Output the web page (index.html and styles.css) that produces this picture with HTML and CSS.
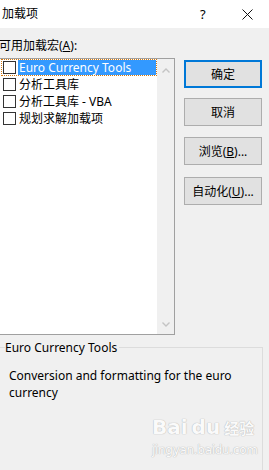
FILE: index.html
```html
<!DOCTYPE html>
<html lang="zh">
<head>
<meta charset="utf-8">
<link rel="stylesheet" href="styles.css">
</head>
<body>
<div class="window">
  <div class="titlebar">
    <span class="title">加载项</span>
    <span class="help">?</span>
    <svg class="close" width="11" height="11" viewBox="0 0 11 11"><path d="M0.5 0.5 L10.5 10.5 M10.5 0.5 L0.5 10.5" stroke="#111" stroke-width="1" fill="none"/></svg>
  </div>
  <div class="content">
    <div class="label">可用加载宏(<u>A</u>):</div>
    <div class="main">
      <div class="listbox">
        <div class="items">
          <div class="item selected"><span class="check"></span><span class="text">Euro Currency Tools</span></div>
          <div class="item"><span class="check"></span><span class="text">分析工具库</span></div>
          <div class="item"><span class="check"></span><span class="text">分析工具库 - VBA</span></div>
          <div class="item"><span class="check"></span><span class="text">规划求解加载项</span></div>
        </div>
        <div class="scrollbar">
          <svg width="8" height="5" viewBox="0 0 8 5"><path d="M0.5 4.5 L4 1 L7.5 4.5" stroke="#c4c4c4" stroke-width="1.4" fill="none"/></svg>
          <svg width="8" height="5" viewBox="0 0 8 5"><path d="M0.5 0.5 L4 4 L7.5 0.5" stroke="#c4c4c4" stroke-width="1.4" fill="none"/></svg>
        </div>
      </div>
      <div class="buttons">
        <button class="btn default">确定</button>
        <button class="btn">取消</button>
        <button class="btn b3">浏览(<u>B</u>)...</button>
        <button class="btn b4">自动化(<u>U</u>)...</button>
      </div>
    </div>
    <div class="group">
      <div class="legend">Euro Currency Tools</div>
      <div class="desc">Conversion and formatting for the euro currency</div>
    </div>
  </div>
  <div class="watermark">
    <div class="wm-top"><span class="wm-bai">Bai</span><span class="wm-du">du</span><span class="wm-jy">经验</span></div>
    <div class="wm-url">jingyan.baidu.com</div>
  </div>
</div>
</body>
</html>
```

FILE: styles.css
```css
html, body {
  margin: 0;
  padding: 0;
}
body {
  width: 269px;
  height: 470px;
  overflow: hidden;
  font-family: "Noto Sans", "Noto Sans CJK SC", sans-serif;
  font-size: 12px;
  color: #000;
}
.window {
  position: relative;
  width: 269px;
  height: 470px;
  background: #f0f0f0;
  overflow: hidden;
}
.titlebar {
  height: 28px;
  background: #fff;
  display: flex;
  align-items: center;
  padding-left: 2px;
}
.title {
  flex: 1;
  font-size: 12px;
  line-height: 16px;
}
.help {
  width: 8px;
  font-size: 13px;
  line-height: 16px;
  margin-right: 34px;
}
.close {
  margin-right: 16px;
}
.content {
  display: flex;
  flex-direction: column;
}
.label {
  padding-top: 10px;
  line-height: 16px;
  height: 17px;
  margin-left: -1px;
}
.label u, .btn u {
  text-underline-offset: 1px;
}
.main {
  display: flex;
  margin-top: 3px;
}
.listbox {
  margin-left: -1px;
  width: 174px;
  height: 275px;
  border: 1px solid #a0a0a0;
  background: #fff;
  display: flex;
}
.items {
  flex: 1;
  padding-left: 1px;
}
.item {
  height: 17px;
  display: flex;
  align-items: center;
  position: relative;
}
.check {
  width: 11px;
  height: 11px;
  border: 1px solid #333;
  background: #fff;
  margin-left: 2px;
  margin-right: 2px;
}
.text {
  line-height: 17px;
  padding-left: 1px;
  white-space: nowrap;
}
.item.selected {
  outline: 1px dotted #d57a10;
  outline-offset: -1px;
}
.item.selected .text {
  background: #3399ff;
  color: #fff;
  flex: 1;
  height: 15px;
  line-height: 15px;
  margin-right: 1px;
}
.scrollbar {
  width: 17px;
  background: #f0f0f0;
  display: flex;
  flex-direction: column;
  justify-content: space-between;
  align-items: center;
  padding: 9px 0 7px;
  box-sizing: border-box;
}
.scrollbar svg {
  display: block;
}
.buttons {
  display: flex;
  flex-direction: column;
  gap: 10px;
  margin-left: 9px;
  margin-top: 2px;
}
.btn {
  width: 78px;
  height: 28px;
  background: #e1e1e1;
  border: 1px solid #adadad;
  font-family: inherit;
  font-size: 12px;
  color: #000;
  padding: 1px 0 0;
  line-height: 16px;
}
.btn.default {
  border: 2px solid #0078d7;
}
.btn.b3 {
  margin-top: 1px;
}
.btn.b4 {
  margin-top: 2px;
}
.group {
  margin-top: 12px;
  margin-left: -1px;
  width: 262px;
  height: 140px;
  border: 1px solid #dcdcdc;
  position: relative;
}
.legend {
  position: absolute;
  top: -8px;
  left: 5px;
  padding-right: 2px;
  background: #f0f0f0;
  line-height: 16px;
}
.desc {
  margin-top: 19px;
  padding-left: 9px;
  padding-right: 14px;
  line-height: 17px;
}
.watermark {
  position: absolute;
  left: 152px;
  top: 414px;
  color: #fafafa;
  font-family: "DejaVu Sans", sans-serif;
  text-shadow: 0 0 1px #b9b9b9, 0 0 1px #b9b9b9;
}
.wm-top {
  display: flex;
  align-items: baseline;
  font-weight: bold;
  font-size: 20px;
  line-height: 26px;
}
.wm-du {
  margin-left: 4px;
}
.wm-jy {
  margin-left: 4px;
  font-family: "Noto Sans CJK SC", sans-serif;
  font-size: 15px;
}
.wm-url {
  font-size: 12px;
  line-height: 14px;
  margin-top: 2px;
  letter-spacing: -0.3px;
}
```
